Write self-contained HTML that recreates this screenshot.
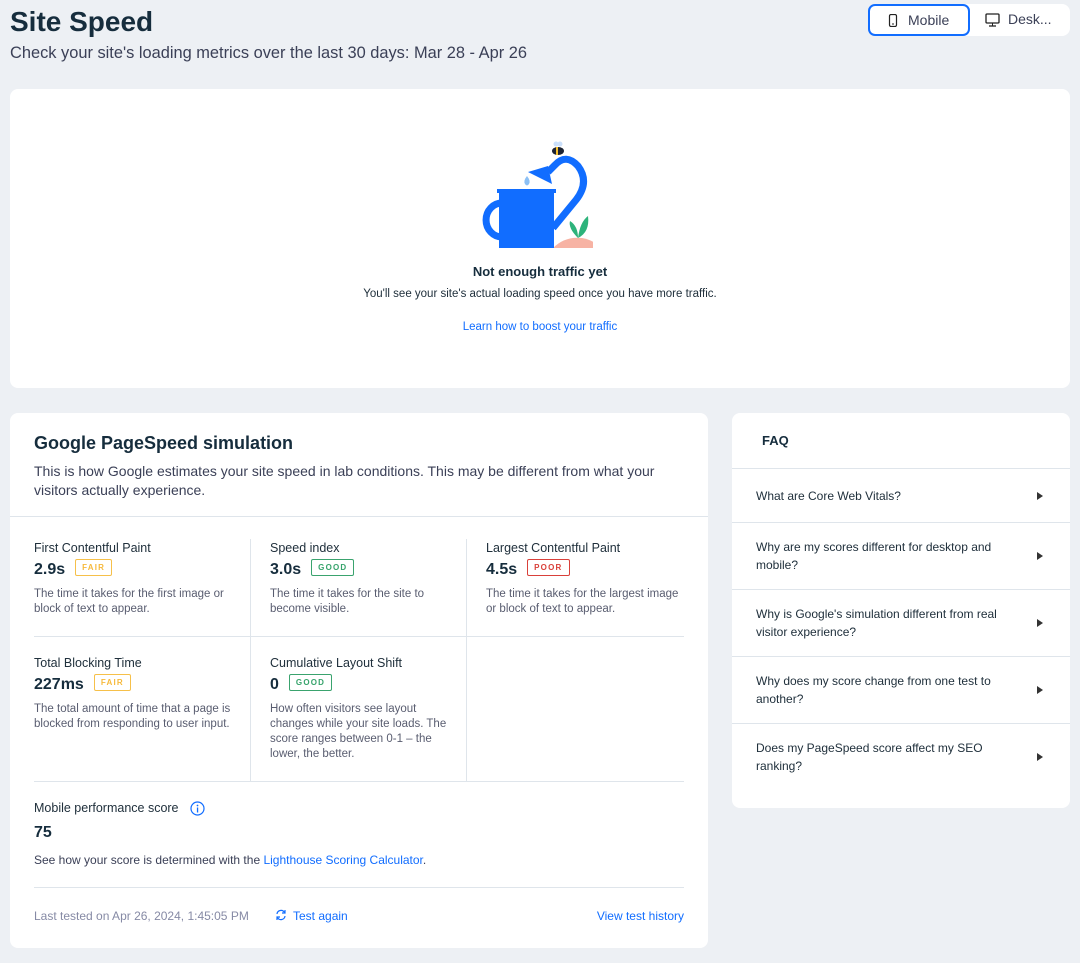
<!DOCTYPE html>
<html><head><meta charset="utf-8"><style>
*{box-sizing:border-box;margin:0;padding:0}
body{width:1080px;height:963px;background:#edf0f4;font-family:"Liberation Sans",sans-serif;color:#20303c;position:relative;overflow:hidden}
.abs{position:absolute}
.card{position:absolute;background:#fff;border-radius:8px}
.badge{display:inline-block;font-size:8px;letter-spacing:1.2px;font-weight:bold;border:1px solid;border-radius:2px;padding:3px 6px;vertical-align:middle;margin-left:10px;position:relative;top:-2px}
.fair{color:#f6b93b;border-color:#f6c04a}
.good{color:#36a36b;border-color:#3aa36e}
.poor{color:#d9403a;border-color:#d9403a}
.m{position:absolute}
.m .t{font-size:12.5px;color:#20303c}
.m .v{font-size:16px;font-weight:bold;margin-top:6px;color:#162d3d}
.m .d{font-size:11.5px;color:#595d70;line-height:15px;margin-top:8px}
.faq{position:absolute;left:0;right:0;border-top:1px solid #dfe5eb;font-size:12px;color:#20303c;line-height:18px;padding-left:24px;padding-right:66px}
.faq .ar{position:absolute;right:27px;top:50%;margin-top:-4px;width:0;height:0;border-left:6px solid #333;border-top:4px solid transparent;border-bottom:4px solid transparent}
a{color:#116dff;text-decoration:none}
</style></head><body>
<div class="abs" style="left:10px;top:6px;font-size:28px;font-weight:bold;color:#162d3d">Site Speed</div>
<div class="abs" style="left:10px;top:44px;font-size:16.4px;color:#3b4057">Check your site's loading metrics over the last 30 days: Mar 28 - Apr 26</div>
<div class="abs" style="left:868px;top:4px;width:202px;height:32px;background:#fff;border-radius:8px"></div>
<div class="abs" style="left:868px;top:4px;width:102px;height:32px;border:2px solid #116dff;border-radius:7px;background:#fff;font-size:14px;color:#3b4057;line-height:28px;padding-left:38px">Mobile
<svg class="abs" style="left:18px;top:8px" width="10" height="13"><rect x="1.5" y="0.5" width="7" height="12" rx="1.5" fill="none" stroke="#222" stroke-width="1.2"/><line x1="4" y1="10" x2="6" y2="10" stroke="#222"/></svg></div>
<div class="abs" style="left:1008px;top:11px;font-size:14px;color:#3b4057">Desk...</div>
<svg class="abs" style="left:985px;top:13px" width="15" height="14"><rect x="1" y="1" width="13" height="9" rx="1" fill="none" stroke="#222" stroke-width="1.3"/><line x1="4" y1="13" x2="11" y2="13" stroke="#222" stroke-width="1.3"/><line x1="7.5" y1="10" x2="7.5" y2="13" stroke="#222"/></svg>

<div class="card" style="left:10px;top:89px;width:1060px;height:299px">
<svg class="abs" style="left:458px;top:50px" width="125" height="112" viewBox="468 139 125 112">
<path d="M502 203 A15 16 0 0 0 502 237" fill="none" stroke="#116dff" stroke-width="7"/>
<path d="M553 228 L576 200 Q590 182 578 166 Q566 153 555 165 L548 172" fill="none" stroke="#116dff" stroke-width="7"/>
<path d="M528 172 L548 166 L552 184 Z" fill="#116dff"/>
<path d="M553 248 Q565 236 582 238 Q594 240 600 248 Z" fill="#f7b3a4"/>
<path d="M578 238 Q568 228 570 221 Q578 226 578 238 Z M578 238 Q580 222 588 216 Q590 232 578 238 Z" fill="#2db37b"/>
<rect x="499" y="190" width="55" height="58" fill="#116dff"/>
<rect x="497" y="189" width="59" height="4" fill="#116dff"/>
<path d="M527 176 Q531 181 529 184 Q527 187 525 184 Q523 181 527 176Z" fill="#8cc0f5"/>
<ellipse cx="558" cy="151" rx="6" ry="4" fill="#1d2433"/><rect x="556" y="147" width="2" height="8" fill="#f6c02e"/><circle cx="556" cy="144" r="2.5" fill="#cbe0fb"/><circle cx="560" cy="144" r="2.5" fill="#cbe0fb"/>
</svg>
<div class="abs" style="left:0;right:0;top:175px;text-align:center;font-size:13px;font-weight:bold;color:#162d3d">Not enough traffic yet</div>
<div class="abs" style="left:0;right:0;top:199px;text-align:center;font-size:11.5px;color:#20303c">You'll see your site's actual loading speed once you have more traffic.</div>
<div class="abs" style="left:0;right:0;top:232px;text-align:center;font-size:11.5px"><a>Learn how to boost your traffic</a></div>
</div>

<div class="card" style="left:10px;top:413px;width:698px;height:535px">
<div class="abs" style="left:24px;top:20px;font-size:18px;font-weight:bold;color:#162d3d">Google PageSpeed simulation</div>
<div class="abs" style="left:24px;top:49px;width:655px;font-size:14px;line-height:18.5px;color:#3b4057">This is how Google estimates your site speed in lab conditions. This may be different from what your visitors actually experience.</div>
<div class="abs" style="left:0;right:0;top:103px;border-top:1px solid #dfe5eb"></div>
<div class="abs" style="left:240px;top:126px;height:242px;border-left:1px solid #dfe5eb"></div>
<div class="abs" style="left:456px;top:126px;height:242px;border-left:1px solid #dfe5eb"></div>
<div class="abs" style="left:24px;width:650px;top:223px;border-top:1px solid #dfe5eb"></div>
<div class="abs" style="left:24px;width:650px;top:368px;border-top:1px solid #dfe5eb"></div>
<div class="m" style="left:24px;top:128px;width:200px"><div class="t">First Contentful Paint</div><div class="v">2.9s<span class="badge fair">FAIR</span></div><div class="d">The time it takes for the first image or block of text to appear.</div></div>
<div class="m" style="left:260px;top:128px;width:185px"><div class="t">Speed index</div><div class="v">3.0s<span class="badge good">GOOD</span></div><div class="d">The time it takes for the site to become visible.</div></div>
<div class="m" style="left:476px;top:128px;width:195px"><div class="t">Largest Contentful Paint</div><div class="v">4.5s<span class="badge poor">POOR</span></div><div class="d">The time it takes for the largest image or block of text to appear.</div></div>
<div class="m" style="left:24px;top:243px;width:200px"><div class="t">Total Blocking Time</div><div class="v">227ms<span class="badge fair">FAIR</span></div><div class="d">The total amount of time that a page is blocked from responding to user input.</div></div>
<div class="m" style="left:260px;top:243px;width:180px"><div class="t">Cumulative Layout Shift</div><div class="v">0<span class="badge good">GOOD</span></div><div class="d">How often visitors see layout changes while your site loads. The score ranges between 0-1 – the lower, the better.</div></div>
<div class="abs" style="left:24px;top:388px;font-size:12.5px">Mobile performance score</div>
<svg class="abs" style="left:180px;top:388px" width="15" height="15"><circle cx="7.5" cy="7.5" r="6.5" fill="none" stroke="#116dff" stroke-width="1.2"/><rect x="6.9" y="6.5" width="1.3" height="5" fill="#116dff"/><circle cx="7.5" cy="4.5" r="0.9" fill="#116dff"/></svg>
<div class="abs" style="left:24px;top:411px;font-size:16px;font-weight:bold;color:#162d3d">75</div>
<div class="abs" style="left:24px;top:440px;font-size:12px;color:#3b4057">See how your score is determined with the <a>Lighthouse Scoring Calculator</a>.</div>
<div class="abs" style="left:24px;width:650px;top:474px;border-top:1px solid #dfe5eb"></div>
<div class="abs" style="left:24px;top:496px;font-size:12px;color:#868aa5">Last tested on Apr 26, 2024, 1:45:05 PM</div>
<svg class="abs" style="left:265px;top:496px" width="12" height="12" viewBox="0 0 12 12"><path d="M2 5 A4 4 0 0 1 9.5 3.5 M10 7 A4 4 0 0 1 2.5 8.5" fill="none" stroke="#116dff" stroke-width="1.2"/><path d="M10 1 V4 H7 M2 11 V8 H5" fill="none" stroke="#116dff" stroke-width="1.2"/></svg>
<div class="abs" style="left:283px;top:496px;font-size:12px"><a>Test again</a></div>
<div class="abs" style="right:24px;top:496px;font-size:12px"><a>View test history</a></div>
</div>

<div class="card" style="left:732px;top:413px;width:338px;height:395px">
<div class="abs" style="left:30px;top:20px;font-size:13px;font-weight:bold;color:#162d3d">FAQ</div>
<div class="faq" style="top:55px;height:54px;padding-top:18px">What are Core Web Vitals?<span class="ar"></span></div>
<div class="faq" style="top:109px;height:67px;padding-top:15px">Why are my scores different for desktop and mobile?<span class="ar"></span></div>
<div class="faq" style="top:176px;height:67px;padding-top:15px">Why is Google's simulation different from real visitor experience?<span class="ar"></span></div>
<div class="faq" style="top:243px;height:67px;padding-top:15px">Why does my score change from one test to another?<span class="ar"></span></div>
<div class="faq" style="top:310px;height:67px;padding-top:15px">Does my PageSpeed score affect my SEO ranking?<span class="ar"></span></div>
</div>
</body></html>
